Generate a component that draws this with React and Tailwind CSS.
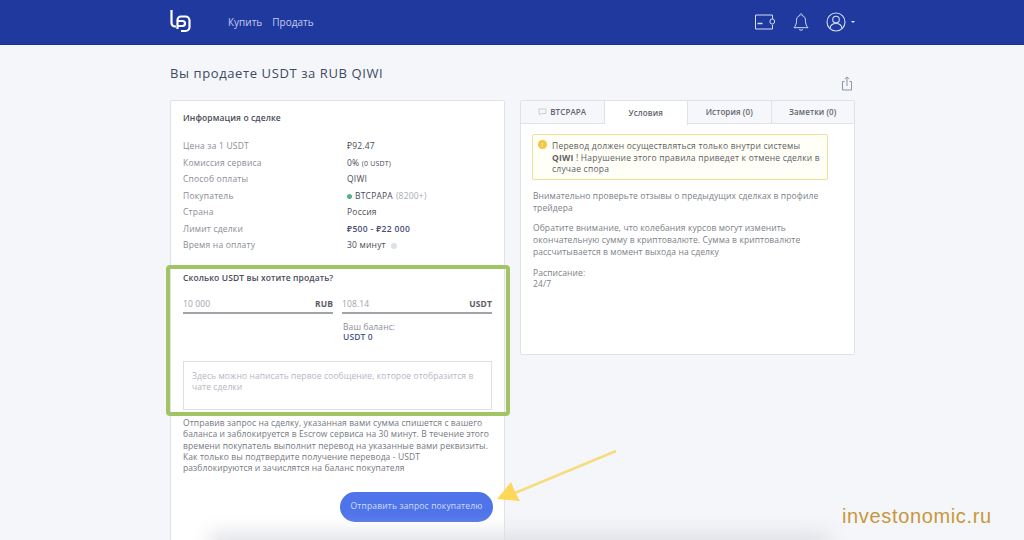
const font = { fontFamily: '"Open Sans", "Noto Sans", sans-serif' };

const rows = [
  ["Цена за 1 USDT", <span className="text-[#4a4a55]">₽92.47</span>],
  ["Комиссия сервиса", <span className="text-[#4a4a55]">0% <span className="text-[7px]">(0 USDT)</span></span>],
  ["Способ оплаты", <span className="text-[#4a4a55]">QIWI</span>],
  ["Покупатель", <span className="flex items-center gap-[3px] text-[#4a4a55]"><span className="w-[5px] h-[5px] rounded-full bg-[#4fb386]" /><span className="font-medium">BTCPAPA</span> <span className="text-[#a8abb5]">(8200+)</span></span>],
  ["Страна", <span className="text-[#4a4a55]">Россия</span>],
  ["Лимит сделки", <span className="font-semibold text-[#4a4d75] tracking-[0.35px]">₽500 - ₽22 000</span>],
  ["Время на оплату", <span className="flex items-center gap-[5px] text-[#4a4a55]">30 минут <span className="w-[6px] h-[6px] rounded-full bg-[#dfe1e6]" /></span>],
];

function Logo() {
  return (
    <svg width="24" height="26" viewBox="0 0 24 26" fill="none" stroke="#fff" strokeWidth="2.200">
      <path d="M2.500 1V14a3.500 3.500 0 0 0 3.500 3.500H7" />
      <path d="M8.500 20V11a3.500 3.500 0 0 1 3.500-3.500" />
      <path d="M12 7.500H16.500a4 4 0 0 1 4 4V18a4 4 0 0 1-4 4H12" />
      <path d="M8.500 12h5a2.500 2.500 0 0 1 0 5H8.500" />
    </svg>
  );
}

function Wallet() {
  return (
    <svg width="20" height="16" viewBox="0 0 20 16" fill="none" stroke="#d5dcf5" strokeWidth="1">
      <path d="M17.500 5V1H.500v14h17v-4" />
      <rect x="15" y="5" width="4.500" height="5" rx="2" />
      <path d="M2.500 9.500h5" strokeWidth="1.500" />
    </svg>
  );
}

function Bell() {
  return (
    <svg width="16" height="19" viewBox="0 0 16 19" fill="none" stroke="#d5dcf5" strokeWidth="1">
      <path d="M8 1a1 1 0 0 1 1 1.500c2.700.7 3.500 2.800 3.500 5.200 0 3.200 1 5.300 2.500 7H1c1.500-1.700 2.500-3.800 2.500-7 0-2.400.8-4.500 3.500-5.200A1 1 0 0 1 8 1z" />
      <path d="M6 16.200c.5 1.300 3.500 1.300 4 0" />
    </svg>
  );
}

function User() {
  return (
    <svg width="20" height="20" viewBox="0 0 20 20" fill="none" stroke="#d5dcf5" strokeWidth="1.100">
      <circle cx="10" cy="10" r="9" />
      <circle cx="10" cy="7.500" r="3.300" />
      <path d="M4 16.500c.5-3.500 3-5 6-5s5.500 1.500 6 5" />
    </svg>
  );
}

function Share() {
  return (
    <svg width="12" height="15" viewBox="0 0 12 15" fill="none" stroke="#8d95a6" strokeWidth="1">
      <path d="M3.500 5.500H1.500v8.500h9V5.500H8.500" />
      <path d="M6 10V1M3.800 3L6 1l2.200 2" />
    </svg>
  );
}

function Tab({ children, active, className = "" }) {
  return (
    <div className={`flex-1 h-[23px] flex items-center justify-center text-[8px] font-semibold tracking-[0.1px] text-[#62656f] ${active ? "bg-white border-b-0 h-[24px] -mb-px z-10 relative" : "bg-[#f6f7fa] border-b border-[#dfe2e9]"} border-r border-[#dfe2e9] ${className}`}>
      {children}
    </div>
  );
}

export default function App() {
  return (
    <div style={font} className="relative h-[540px] w-[1024px] overflow-hidden bg-[#f5f6fa]">
      <header className="h-[45px] bg-[#1f399e] border-b border-[#1b3186] flex items-center pl-[169px] pr-[169px]">
        <Logo />
        <nav className="flex gap-[10px] ml-[35px] text-[10px] text-[#c3cdf0]">
          <span>Купить</span>
          <span>Продать</span>
        </nav>
        <div className="ml-auto flex items-center">
          <Wallet />
          <span className="ml-[18px] flex"><Bell /></span>
          <span className="ml-[17px] flex"><User /></span>
          <span className="ml-[5px] w-0 h-0 border-x-[2px] border-x-transparent border-t-[2px] border-t-[#e5e9f8]" />
        </div>
      </header>

      <main className="pl-[170px] w-[855px] tracking-[0.1px]">
        <div className="flex justify-between items-start h-[55px]">
          <h1 className="mt-[19px] text-[13px] leading-[18px] font-medium text-[#3c4a63] tracking-[0.6px]">Вы продаете USDT за RUB QIWI</h1>
          <span className="mt-[31px] mr-[2px] flex"><Share /></span>
        </div>

        <div className="flex gap-[15px] items-start">
          <section className="w-[335px] h-[480px] shrink-0 bg-white border border-[#dfe2e9] rounded-[2px] px-[12px] text-[#8a8d97]">
            <h2 className="mt-[11px] text-[8.500px] leading-[12px] font-semibold text-[#4b4d58]">Информация о сделке</h2>
            <dl className="mt-[14px] flex flex-col">
              {rows.map(([k, v]) => (
                <div key={k} className="flex h-[16.600px] items-center text-[8.500px] tracking-[0.2px]">
                  <dt className="w-[164px] shrink-0">{k}</dt>
                  <dd className="flex items-center">{v}</dd>
                </div>
              ))}
            </dl>

            <h3 className="mt-[18px] text-[8.500px] leading-[12px] font-semibold text-[#4b4d58]">Сколько USDT вы хотите продать?</h3>
            <div className="mt-[14px] flex gap-[9px]">
              <div className="flex-1 flex justify-between border-b-2 border-[#a2a4a9] h-[16px] text-[8.500px] leading-[12px]">
                <span className="text-[#a0a3ab]">10 000</span>
                <span className="font-bold text-[#5b5d66]">RUB</span>
              </div>
              <div className="flex-1 flex justify-between border-b-2 border-[#a2a4a9] h-[16px] text-[8.500px] leading-[12px]">
                <span className="text-[#a0a3ab]">108.14</span>
                <span className="font-bold text-[#5b5d66]">USDT</span>
              </div>
            </div>
            <div className="mt-[8px] ml-[160px] text-[8.500px] leading-[10px]">
              <div className="text-[#8a8d97]">Ваш баланс:</div>
              <div className="font-semibold text-[#4a5a85]">USDT 0</div>
            </div>
            <div className="mt-[19px] h-[49px] border border-[#dcdfe5] px-[8px] pt-[8px] text-[8.500px] leading-[11px] text-[#b5b7bf]">
              Здесь можно написать первое сообщение, которое отобразится в чате сделки
            </div>
            <p className="mt-[7px] w-[314px] text-[8.500px] leading-[11.300px] text-[#75787f]">
              Отправив запрос на сделку, указанная вами сумма спишется с вашего баланса и заблокируется в Escrow сервиса на 30 минут. В течение этого времени покупатель выполнит перевод на указанные вами реквизиты. Как только вы подтвердите получение перевода - USDT<br />разблокируются и зачислятся на баланс покупателя
            </p>
            <div className="mt-[18px] flex justify-end -mr-px">
              <button className="w-[153px] h-[30px] rounded-full bg-[#4f74ea] text-[8.500px] tracking-[0.15px] text-[#cfdcf8]">Отправить запрос покупателю</button>
            </div>
          </section>

          <section className="w-[335px] h-[255px] shrink-0 bg-white border border-[#dfe2e9] rounded-[2px]">
            <div className="flex">
              <Tab className="gap-[3px]">
                <svg width="9" height="8" viewBox="0 0 9 8" fill="none" stroke="#c8d2cf" strokeWidth="1"><path d="M1 1h7v4.500H3.500L1.500 7V5.500H1z" /></svg>
                BTCPAPA
              </Tab>
              <Tab active>Условия</Tab>
              <Tab>История (0)</Tab>
              <Tab className="!border-r-0">Заметки (0)</Tab>
            </div>
            <div className="px-[12px] text-[8.500px] leading-[11.700px] text-[#7c7f87]">
              <div className="mt-[10px] -ml-px w-[296px] h-[46px] border border-[#eee29a] bg-[#fffef7] rounded-[2px] pl-[19px] pr-[6px] pt-[5px] relative text-[#5c5e66] tracking-[0.22px]">
                <span className="absolute left-[5px] top-[5px] w-[9px] h-[9px] rounded-full bg-[#f2c63f] flex items-center justify-center text-[6px] leading-none font-bold text-[#fff7d6]">!</span>
                Перевод должен осуществляться только внутри системы<br /><b className="font-bold">QIWI</b> ! Нарушение этого правила приведет к отмене сделки в случае спора
              </div>
              <p className="mt-[10px] w-[300px]">Внимательно проверьте отзывы о предыдущих сделках в профиле трейдера</p>
              <p className="mt-[9px] w-[300px]">Обратите внимание, что колебания курсов могут изменить окончательную сумму в криптовалюте. Сумма в криптовалюте рассчитывается в момент выхода на сделку</p>
              <p className="mt-[9px]">Расписание:<br />24/7</p>
            </div>
          </section>
        </div>
      </main>

      {/* annotation overlays */}
      <div className="absolute left-[166px] top-[265px] w-[344px] h-[151px] border-[4px] border-[#a2c465] rounded-[4px]" />
      <svg className="absolute left-[495px] top-[445px]" width="125" height="60" viewBox="0 0 125 60" fill="none">
        <path d="M121 6L20 48" stroke="#f6dc7c" strokeWidth="2.500" />
        <path d="M2 54L16 37l4 10 5 9z" fill="#fdd757" />
      </svg>
      <div className="absolute left-[210px] right-[195px] -bottom-[14px] h-[20px] bg-[#dcdde2] blur-[10px]" />
      <div style={{ fontFamily: '"Liberation Sans", sans-serif' }} className="absolute left-[842px] top-[505px] text-[20px] leading-[22px] tracking-[0.65px] text-[#c8963a]">investonomic.ru</div>
    </div>
  );
}
